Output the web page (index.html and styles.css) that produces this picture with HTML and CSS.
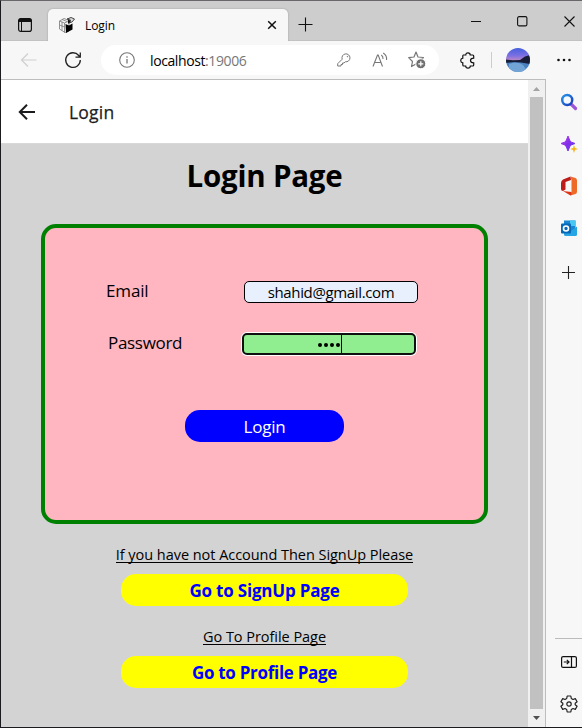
FILE: index.html
```html
<!DOCTYPE html>
<html lang="en">
<head>
<meta charset="utf-8">
<title>Login</title>
<link rel="stylesheet" href="styles.css">
</head>
<body>
<div class="window">
  <header class="tabbar">
    <svg class="tab-actions" width="16" height="16" viewBox="0 0 16 16"><rect x="1.6" y="1.6" width="12.8" height="12.8" rx="2.2" fill="none" stroke="#111" stroke-width="1.2"/><path d="M1.5 5V3.5Q1.5 1.5 3.5 1.5H12.5Q14.500 1.500 14.5 3.500V5Z" fill="#111"/><path d="M4.500 5V14.500" stroke="#111"/></svg>
    <div class="tab">
      <svg width="18" height="18" viewBox="0 0 18 18"><path d="M1.500 5L6 2.500 11 4.500V15L7 16.500 1.500 13ZM1.500 5L6.500 7V16.500M1.500 9L6.500 11M4 3.500L9 5.500M4 6V14.500M6.500 7L11 5" fill="none" stroke="#777" stroke-width=".8"/><path d="M7.500 8L11 9.500 14.500 7.500V13.500L8 17Z" fill="#000"/><path d="M9 3L13 1.500 16.500 3 14 6 11 7 12.500 4Z" fill="#ddd" stroke="#333" stroke-width=".9"/><path d="M10 3.500L13 5 10 8Z" fill="#111"/></svg>
      <span class="tab-name">Login</span>
      <svg width="10" height="10" viewBox="0 0 10 10"><path d="M1.200 1.200L8.800 8.800M8.800 1.200L1.200 8.800" stroke="#111" stroke-width="1.500"/></svg>
    </div>
    <svg class="new-tab" width="15" height="15" viewBox="0 0 15 15"><path d="M.5 7.500H14.500M7.500.5V14.500" stroke="#111" stroke-width="1.100"/></svg>
    <div class="controls">
      <svg width="10" height="11" viewBox="0 0 10 11"><path d="M0 5.500H10" stroke="#111"/></svg>
      <svg width="11" height="11" viewBox="0 0 11 11"><rect x=".6" y=".6" width="9.300" height="9.300" rx="1.500" fill="none" stroke="#111" stroke-width="1.100"/></svg>
      <svg width="11" height="11" viewBox="0 0 11 11"><path d="M.5.5L10.500 10.500M10.500.5L.5 10.500" stroke="#111" stroke-width="1.100"/></svg>
    </div>
  </header>
  <nav class="toolbar">
    <svg class="back" width="18" height="16" viewBox="0 0 18 16"><path d="M16.500 8H1.500M8 1.500L1.500 8 8 14.500" fill="none" stroke="#cfcfcf" stroke-width="1.200"/></svg>
    <svg class="reload" width="18" height="18" viewBox="0 0 18 18"><path d="M16.300 9A7.300 7.300 0 1 1 14.700 4.500L16 6M16.300 1.500V6.200H11.500" fill="none" stroke="#222" stroke-width="1.300"/></svg>
    <div class="address">
      <svg class="info" width="16" height="16" viewBox="0 0 16 16"><circle cx="8" cy="8" r="7.300" fill="none" stroke="#777" stroke-width="1.100"/><path d="M8 7V11.500M8 4.200V5.700" stroke="#777" stroke-width="1.300"/></svg>
      <span class="url">localhost<span class="port">:19006</span></span>
      <svg class="key" width="14" height="14" viewBox="0 0 14 14"><path d="M5.200 6.200A4 4 0 1 1 8.300 8.800L7 10H5.500V11.500H4V13H.7V10.700ZM10.200 3.400H10.700V3.900H10.200Z" fill="none" stroke="#777" stroke-linejoin="round"/></svg>
      <svg class="read" width="17" height="16" viewBox="0 0 17 16"><path d="M1 14.500L5.500 3H6.200L10.500 14.500M2.500 10.500H9M9.300 3Q11.300 4.500 11 7M11.200 1Q15.200 3.500 14.500 8" fill="none" stroke="#777" stroke-width="1.100"/></svg>
      <svg class="star" width="18" height="18" viewBox="0 0 18 18"><path d="M8 1L10 6 15.500 6.500 11.500 10 12 15.500 8 13 3.500 15.500 4.500 10.500.7 6.700 6 6Z" fill="none" stroke="#777" stroke-width="1.200" stroke-linejoin="round"/><circle cx="12.800" cy="12.800" r="5" fill="#707070" stroke="#fff"/><path d="M10.300 12.800H15.300M12.800 10.300V15.300" stroke="#fff" stroke-width="1.200"/></svg>
    </div>
    <svg class="puzzle" width="16" height="17" viewBox="0 0 16 17"><path d="M3.300 3H5.800Q5.800.8 8 .8 10.200.8 10.200 3H12.700Q13.700 3 13.700 4V6.200Q10.500 6.200 10.500 8.500 10.500 10.800 13.700 10.800V13Q13.700 14 12.700 14H10.300Q10.200 16.200 8 16.200 5.800 16.200 5.700 14H3.800Q2.800 14 2.800 13V10.800Q.7 10.500.7 8.500.7 6.500 2.800 6.200V4Q2.800 3 3.300 3Z" fill="none" stroke="#111" stroke-width="1.200"/></svg>
    <i class="divider"></i>
    <svg class="avatar" width="24" height="24" viewBox="0 0 24 24"><defs><clipPath id="a"><circle cx="12" cy="12" r="12"/></clipPath><linearGradient id="sky" x2="0" y2="1"><stop stop-color="#4560dc"/><stop offset=".6" stop-color="#7d70e4"/><stop offset="1" stop-color="#c68abd"/></linearGradient></defs><g clip-path="url(#a)"><path d="M0 0H24V13H0Z" fill="url(#sky)"/><path d="M0 13H24V24H0Z" fill="#4a80c0"/><path d="M3 16Q12 13 17 17L22 24H3Z" fill="#72a5d6"/><path d="M0 11.500L7 12.200 14 12 19 8.500 24 7V16L15 14.500 8 14 0 15Z" fill="#171d37"/></g></svg>
    <svg class="more" width="14" height="4" viewBox="0 0 14 4"><g fill="#111"><circle cx="1.500" cy="2" r="1.300"/><circle cx="7" cy="2" r="1.300"/><circle cx="12.500" cy="2" r="1.300"/></g></svg>
  </nav>
  <div class="workspace">
    <main class="page">
      <div class="app-header">
        <svg width="18" height="18" viewBox="0 0 18 18"><path d="M17 9H2M9 1.800L1.800 9 9 16.200" fill="none" stroke="#1c1c1e" stroke-width="2"/></svg>
        <span>Login</span>
      </div>
      <h1><span>Login Page</span></h1>
      <section class="card">
        <div class="field email"><label>Email</label><div class="input"><span>shahid@gmail.com</span></div></div>
        <div class="field password"><label>Password</label><div class="input focused"><i></i><i></i><i></i><i></i><b></b></div></div>
        <div class="login-button"><span>Login</span></div>
      </section>
      <p class="hint signup"><span>If you have not Accound Then SignUp Please</span></p>
      <div class="link-button go-signup"><span>Go to SignUp Page</span></div>
      <p class="hint profile"><span>Go To Profile Page</span></p>
      <div class="link-button go-profile"><span>Go to Profile Page</span></div>
    </main>
    <div class="scrollbar">
      <svg width="15" height="17" viewBox="0 0 15 17"><path d="M3 11L6.500 7 10 11Z" fill="#a3a3a3"/></svg>
      <div class="thumb"></div>
      <svg width="15" height="18" viewBox="0 0 15 18"><path d="M3 7L6.500 11 10 7Z" fill="#505050"/></svg>
    </div>
    <aside class="sidebar">
      <svg width="18" height="18" viewBox="0 0 18 18"><defs><linearGradient id="s" x2="1" y2="1"><stop stop-color="#2894e8"/><stop offset="1" stop-color="#173bb8"/></linearGradient></defs><path d="M11 11L15.500 15.500" stroke="#9b55d7" stroke-width="3.200" stroke-linecap="round"/><circle cx="7.200" cy="7" r="5" fill="#f4faff" stroke="url(#s)" stroke-width="2.500"/></svg>
      <svg width="18" height="18" viewBox="0 0 18 18"><defs><linearGradient id="p" x2="1" y2="1"><stop stop-color="#b343ef"/><stop offset=".5" stop-color="#842eea"/><stop offset="1" stop-color="#5745e7"/></linearGradient></defs><path d="M8 1L10 6Q10.500 7 15 8.500 10.500 10 10 11L8 16 6 11Q5.500 10 1 8.500 5.500 7 6 6Z" fill="url(#p)" stroke="url(#p)" stroke-linejoin="round"/><path d="M14 10L15 13 18 14 15 15 14 18 13 15 10 14 13 13Z" fill="#f5b51b"/></svg>
      <svg class="office" width="18" height="20" viewBox="0 0 18 20"><path d="M10.500.5L3 3.500Q1 4.500 1 7V13Q1 15 3 15L5.500 13.500V6L11 4Z" fill="#bd1d1a"/><path d="M10.500.5L15.500 2Q17 2.500 17 4.500V15.500Q17 17.500 15.500 18L10.500 19.500 11.500 16V4Z" fill="#ee6a27"/><path d="M3 15L11.500 16V18.500L10.500 19.500Z" fill="#dd3419"/></svg>
      <svg width="18" height="18" viewBox="0 0 18 18"><path d="M4 1.500H15.500V13H4Z" fill="#1986d1"/><path d="M10 1.500H15.500V7H10Z" fill="#48c7f3"/><path d="M4 9L11 12 17 7.500V15.500Q17 17 15.500 17H5.500Q4 17 4 15.500Z" fill="#26a5e5"/><rect x="1" y="4.500" width="10" height="10" rx="1" fill="#0868b8"/><circle cx="6" cy="9.500" r="2.500" fill="none" stroke="#fff" stroke-width="1.600"/></svg>
      <svg class="add" width="13" height="13" viewBox="0 0 13 13"><path d="M0 6.500H13M6.500 0V13" stroke="#222" stroke-width="1.100"/></svg>
      <i class="rule"></i>
      <svg class="collapse" width="16" height="12" viewBox="0 0 16 12"><rect x=".6" y=".6" width="14.800" height="10.800" rx="1.500" fill="none" stroke="#111" stroke-width="1.200"/><path d="M10.500.5V11.500M2.800 6H8M5.800 3.800L8 6 5.800 8.200" fill="none" stroke="#111" stroke-width="1.200"/></svg>
      <svg class="gear" width="18" height="18" viewBox="0 0 18 18"><path d="M7.200 1H10.800L11.300 3.500 13 4.500 15.300 3.600 17.100 6.700 15.200 8.300V9.700L17.100 11.300 15.300 14.400 13 13.500 11.300 14.500 10.800 17H7.200L6.700 14.500 5 13.500 2.700 14.400.9 11.300 2.800 9.700V8.300L.9 6.700 2.700 3.600 5 4.500 6.700 3.500Z" fill="none" stroke="#222" stroke-width="1.200" stroke-linejoin="round"/><circle cx="9" cy="9" r="2.200" fill="none" stroke="#222" stroke-width="1.200"/></svg>
    </aside>
  </div>
</div>
</body>
</html>
```
FILE: styles.css
```css
* { box-sizing: border-box; }
body { margin: 0; font-family: "Open Sans", "Noto Sans", sans-serif; color: #000; overflow: hidden; }
svg { display: block; flex: none; }
span, label { white-space: nowrap; }
.window { width: 582px; height: 728px; border: 1px solid #1b1b1f; border-top-color: #69676a; border-right: 0; display: flex; flex-direction: column; background: #f7f7f7; }

.tabbar { height: 40px; flex: none; background: #cdcdcd; border-bottom: 1px solid #c2c2c2; display: flex; align-items: flex-start; }
.tab-actions { margin: 16px 0 0 16px; }
.tab { width: 240px; height: 32px; margin: 8px 0 0 15px; padding: 0 11px 0 10px; background: #f7f7f7; border-radius: 5px 5px 0 0; box-shadow: 0 0 2px #999; clip-path: inset(-3px -3px 0); display: flex; align-items: center; }
.tab-name { margin: 0 auto 0 9px; font-size: 12px; letter-spacing: -.1px; }
.new-tab { margin: 16px 0 0 10px; }
.controls { display: flex; gap: 36px; margin: 15px 7px 0 auto; }

.toolbar { height: 38px; flex: none; display: flex; align-items: center; }
.back { margin-left: 19px; }
.reload { margin-left: 26px; }
.address { width: 338px; height: 30px; margin-left: 19px; border-radius: 15px; background: #fff; display: flex; align-items: center; }
.info { margin-left: 18px; }
.url { margin-left: 15px; font-size: 14px; letter-spacing: -.4px; }
.port { color: #777; letter-spacing: -.4px; }
.key { margin-left: auto; }
.read { margin-left: 21px; }
.star { margin: 0 13px 0 19px; }
.puzzle { margin-left: 21px; }
.divider { width: 1px; height: 16px; margin-left: 15px; background: #ccc; }
.avatar { margin-left: 14px; }
.more { margin-left: 27px; }

.workspace { flex: 1; display: flex; min-height: 0; }
.page { width: 527px; border-top: 1px solid #bdbdbd; background: #d3d3d3; }
.app-header { height: 64px; border-bottom: 1px solid #d8d8d8; background: #fff; display: flex; align-items: center; color: #1c1c1e; }
.app-header svg { margin-left: 17px; }
.app-header span { margin-left: 33px; padding-top: 1px; font-size: 17.500px; letter-spacing: .2px; -webkit-text-stroke: .25px #1c1c1e; }
h1 { height: 40px; margin: 12px 0 28px; text-align: center; font-size: 29.500px; line-height: 40px; font-weight: 700; letter-spacing: -.2px; }
.card { width: 447px; height: 300px; margin: 0 auto; border: 4px solid green; border-radius: 15px; background: #ffb6c1; padding-top: 53px; }
.field { display: flex; align-items: center; height: 22px; font-size: 17px; }
.field label { height: 24px; margin-top: -2px; line-height: 24px; }
.email { padding-left: 61px; }
.password { margin-top: 30px; padding-left: 63px; }
.email label { width: 138px; letter-spacing: -.15px; }
.password label { width: 134px; letter-spacing: -.3px; }
.input { width: 174px; height: 22px; border: 1px solid #000; border-radius: 5px; background: #e8f0fe; display: flex; align-items: center; justify-content: center; font-size: 15px; letter-spacing: -.35px; }
.focused { background: #90ee90; border: 2px solid #101010; box-shadow: 0 0 0 1px #fff; }
.focused i { width: 4px; height: 4px; margin: 2px 1px 0; border-radius: 50%; background: #000; }
.focused b { width: 1px; height: 18px; background: #000; }
.login-button { width: 159px; height: 32px; margin: 55px auto 0 140px; border-radius: 15px; background: #00f; color: #fff; text-align: center; font-size: 17px; line-height: 33px; letter-spacing: -.2px; }
.hint { height: 24px; margin: 0; text-align: center; font-size: 14.500px; line-height: 24px; }
.hint span { border-bottom: 1px solid #000; display: inline-block; height: 16px; line-height: 15px; letter-spacing: -.04px; }
.hint.signup { margin-top: 19px; }
.hint.profile { margin-top: 19px; }
.link-button { width: 287px; height: 32px; margin: 7px auto 0; border-radius: 15px; background: #ff0; color: #00f; text-align: center; font-size: 17px; font-weight: 700; line-height: 34px; letter-spacing: -.2px; }
.link-button.go-profile { letter-spacing: -.3px; }

.scrollbar { width: 18px; border-top: 1px solid #bdbdbd; border-right: 1px solid #bdbdbd; background: #f0f0f0; display: flex; flex-direction: column; padding-left: 2px; }
.thumb { width: 13px; flex: 1; background: #c1c1c1; }
.sidebar { flex: 1; display: flex; flex-direction: column; align-items: flex-start; gap: 24px; padding: 14px 0 14px 14px; }
.office { margin: -1px 0; }
.sidebar .add { margin: 5px 0 0 2px; }
.rule { width: 27px; height: 1px; margin: auto 0 -7px -5px; background: #bbb; }
.collapse { margin: 0 0 3px 1px; }
```
